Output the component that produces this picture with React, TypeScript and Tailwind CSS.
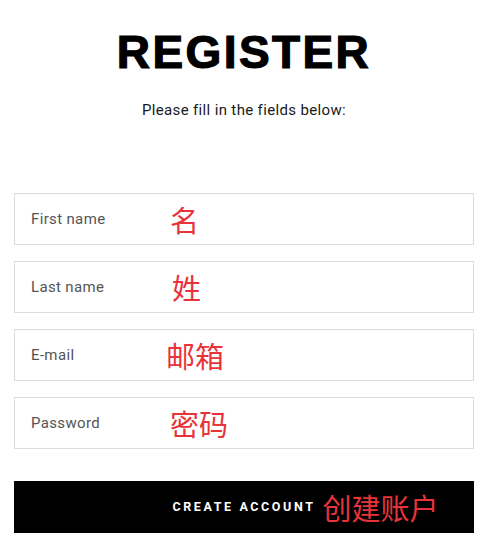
import React from 'react';

const fields = [
  { label: 'First name', zh: '名', offset: 'ml-0' },
  { label: 'Last name', zh: '姓', offset: 'ml-[2px]' },
  { label: 'E-mail', zh: '邮箱', offset: 'ml-[-4px]' },
  { label: 'Password', zh: '密码', offset: 'ml-0' },
];

const zhFont = { fontFamily: '"Noto Sans CJK SC", sans-serif' };

export default function App() {
  return (
    <div className="min-h-[541px] w-full bg-white" style={{ fontFamily: 'Roboto, "Noto Sans CJK SC", sans-serif' }}>
      <div className="ml-[14px] w-[460px] pt-[29px]">
        <h1
          className="text-center text-[46px] font-bold leading-none tracking-[2.4px] text-black"
          style={{ fontFamily: '"Liberation Sans", Arial, sans-serif', WebkitTextStroke: '1.2px #000' }}
        >
          REGISTER
        </h1>
        <p className="mt-[25px] text-center text-[15px] leading-5 tracking-[0.35px] text-[#1a1a1a]">
          Please fill in the fields below:
        </p>

        <form className="mt-[73px] flex flex-col gap-4">
          {fields.map((f) => (
            <div key={f.label} className="flex h-[52px] items-center border border-[#dcdcdc] pl-4">
              <span className="w-[139px] text-[15px] tracking-[0.35px] text-[#555]">{f.label}</span>
              <span className={`text-[29px] leading-none text-[#e8333a] ${f.offset}`} style={zhFont}>
                {f.zh}
              </span>
            </div>
          ))}

          <button
            type="button"
            className="mt-4 flex h-[52px] w-full items-center justify-center bg-black"
          >
            <span className="relative text-[12.5px] font-bold tracking-[2.6px] text-white">
              CREATE ACCOUNT
              <span
                className="absolute left-full top-1/2 ml-[7px] -translate-y-1/2 whitespace-nowrap text-[29px] font-normal leading-none tracking-normal text-[#e8333a]"
                style={zhFont}
              >
                创建账户
              </span>
            </span>
          </button>
        </form>
      </div>
    </div>
  );
}
